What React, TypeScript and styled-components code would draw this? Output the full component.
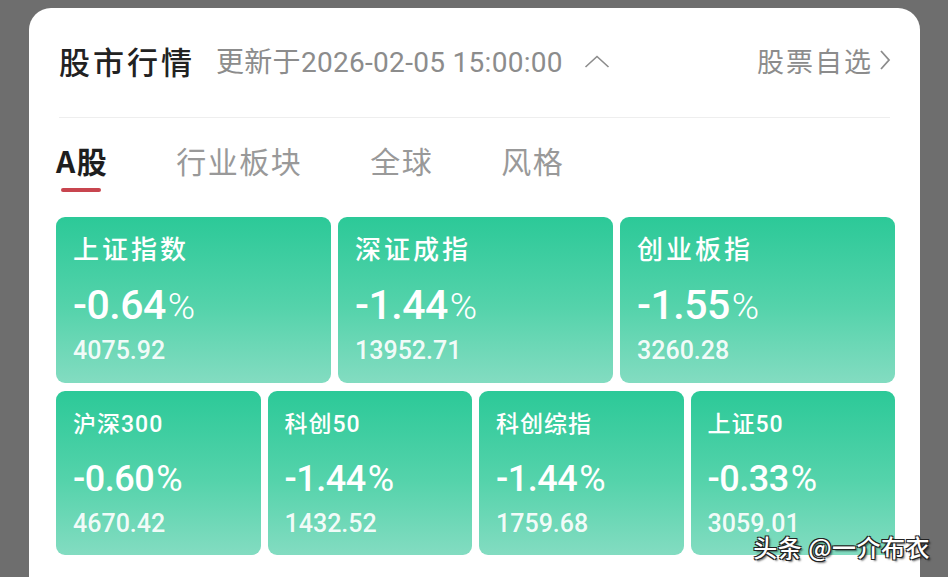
import React from "react";
import styled, { createGlobalStyle } from "styled-components";

const GlobalStyle = createGlobalStyle`
  html, body {
    margin: 0;
    padding: 0;
    background: #6e6e6e;
    overflow: hidden;
  }
  body {
    font-family: "Noto Sans CJK SC", "Noto Sans", sans-serif;
  }
`;

const Page = styled.div`
  position: relative;
  width: 948px;
  height: 577px;
  padding: 8px 28px 0 29px;
  box-sizing: border-box;
  overflow: hidden;
`;

const Panel = styled.div`
  background: #fff;
  border-radius: 22px 22px 0 0;
  padding: 19px 25px 40px 27px;
  min-height: 620px;
  box-sizing: border-box;
`;

const Header = styled.div`
  display: flex;
  align-items: center;
  height: 66px;
  padding-left: 3px;
`;

const Title = styled.span`
  font-size: 31px;
  font-weight: 500;
  color: #222;
  letter-spacing: 3px;
`;

const Updated = styled.span`
  margin-left: 21px;
  font-size: 28px;
  color: #8c8c8c;
  letter-spacing: 0.3px;
  font-family: "Roboto", "Noto Sans CJK SC", sans-serif;
`;

const Toggle = styled.svg`
  margin-left: 21px;
  margin-top: 2px;
`;

const Spacer = styled.div`
  flex: 1;
`;

const Watchlist = styled.a`
  display: flex;
  align-items: center;
  gap: 6px;
  font-size: 27px;
  color: #8c8c8c;
  letter-spacing: 2px;
  margin-right: 4px;
`;

const Divider = styled.div`
  height: 1px;
  background: #eeeeee;
  margin: 24px 5px 0 3px;
`;

const Tabs = styled.div`
  display: flex;
  gap: 68px;
  margin-top: 22px;
`;

const Tab = styled.div<{ $active?: boolean }>`
  display: flex;
  flex-direction: column;
  align-items: center;
  font-size: 30px;
  line-height: 40px;
  letter-spacing: 1.5px;
  font-weight: ${(p) => (p.$active ? 700 : 400)};
  color: ${(p) => (p.$active ? "#1e1e1e" : "#999")};

  &::after {
    content: "";
    width: 40px;
    height: 4px;
    border-radius: 2px;
    margin-top: 8px;
    margin-right: 3px;
    background: ${(p) => (p.$active ? "#c8454f" : "transparent")};
  }
`;

const Grid = styled.div`
  display: flex;
  flex-direction: column;
  gap: 8px;
  margin-top: 25px;
`;

const Row = styled.div<{ $cols: number }>`
  display: grid;
  grid-template-columns: repeat(${(p) => p.$cols}, 1fr);
  gap: 7px;
`;

const Card = styled.div<{ $big?: boolean }>`
  height: ${(p) => (p.$big ? 166 : 164)}px;
  border-radius: 9px;
  background: linear-gradient(180deg, #2cc998 0%, #55d3ab 55%, #83dcc1 100%);
  color: #fff;
  padding: ${(p) => (p.$big ? "17px" : "20px")} 17px 0 17px;
  box-sizing: border-box;
  display: flex;
  flex-direction: column;
`;

const Name = styled.div<{ $big?: boolean }>`
  font-size: ${(p) => (p.$big ? 26 : 23)}px;
  line-height: ${(p) => (p.$big ? 32 : 28)}px;
  font-weight: 500;
  letter-spacing: ${(p) => (p.$big ? 3 : 1)}px;
  font-family: "Roboto", "Noto Sans CJK SC", sans-serif;
`;

const Change = styled.div<{ $big?: boolean }>`
  margin-top: ${(p) => (p.$big ? 17 : 20)}px;
  font-family: "Roboto", sans-serif;
  font-size: ${(p) => (p.$big ? 41 : 36)}px;
  line-height: ${(p) => (p.$big ? 44 : 40)}px;
  font-weight: 500;
  letter-spacing: -0.5px;
`;

const Pct = styled.span<{ $big?: boolean }>`
  font-size: ${(p) => (p.$big ? 37 : 36)}px;
  font-weight: ${(p) => (p.$big ? 300 : 400)};
  margin-left: 2px;
`;

const Value = styled.div<{ $big?: boolean }>`
  margin-top: ${(p) => (p.$big ? 8 : 11)}px;
  font-family: "Roboto", sans-serif;
  font-size: 25px;
  line-height: 28px;
  font-weight: 500;
  color: rgba(255, 255, 255, 0.93);
`;

const Watermark = styled.div`
  position: absolute;
  right: 18px;
  bottom: 13px;
  font-size: 24px;
  font-weight: 500;
  color: #fff;
  letter-spacing: 0.5px;
  text-shadow: -1px -1px 0 #222, 1px -1px 0 #222, -1px 1px 0 #222,
    1px 1px 0 #222, 2px 2px 2px rgba(0, 0, 0, 0.6);
`;

type Index = { name: string; change: string; value: string };

const majors: Index[] = [
  { name: "上证指数", change: "-0.64", value: "4075.92" },
  { name: "深证成指", change: "-1.44", value: "13952.71" },
  { name: "创业板指", change: "-1.55", value: "3260.28" },
];

const others: Index[] = [
  { name: "沪深300", change: "-0.60", value: "4670.42" },
  { name: "科创50", change: "-1.44", value: "1432.52" },
  { name: "科创综指", change: "-1.44", value: "1759.68" },
  { name: "上证50", change: "-0.33", value: "3059.01" },
];

const tabs = ["A股", "行业板块", "全球", "风格"];

const IndexCard: React.FC<{ item: Index; big?: boolean }> = ({ item, big }) => (
  <Card $big={big}>
    <Name $big={big}>{item.name}</Name>
    <Change $big={big}>
      {item.change}
      <Pct $big={big}>%</Pct>
    </Change>
    <Value $big={big}>{item.value}</Value>
  </Card>
);

const App: React.FC = () => {
  return (
    <>
      <GlobalStyle />
      <Page>
        <Panel>
          <Header>
            <Title>股市行情</Title>
            <Updated>更新于2026-02-05 15:00:00</Updated>
            <Toggle width="26" height="13" viewBox="0 0 26 13">
              <polyline
                points="1.5,12 13,1.5 24.5,12"
                fill="none"
                stroke="#8c8c8c"
                strokeWidth="1.6"
              />
            </Toggle>
            <Spacer />
            <Watchlist>
              股票自选
              <svg width="12" height="22" viewBox="0 0 12 22">
                <polyline
                  points="2,2 10,11 2,20"
                  fill="none"
                  stroke="#8c8c8c"
                  strokeWidth="1.8"
                />
              </svg>
            </Watchlist>
          </Header>
          <Divider />
          <Tabs>
            {tabs.map((t, i) => (
              <Tab key={t} $active={i === 0}>
                {t}
              </Tab>
            ))}
          </Tabs>
          <Grid>
            <Row $cols={3}>
              {majors.map((m) => (
                <IndexCard key={m.name} item={m} big />
              ))}
            </Row>
            <Row $cols={4}>
              {others.map((m) => (
                <IndexCard key={m.name} item={m} />
              ))}
            </Row>
          </Grid>
        </Panel>
        <Watermark>头条 @一介布衣</Watermark>
      </Page>
    </>
  );
};

export default App;
